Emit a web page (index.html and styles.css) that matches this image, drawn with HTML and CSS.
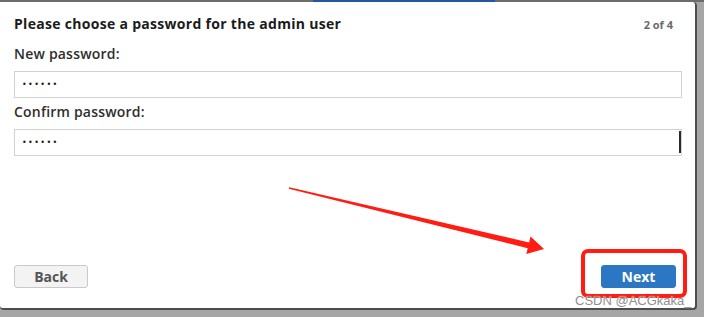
FILE: index.html
```html
<!DOCTYPE html>
<html lang="en">

<head>
    <meta charset="utf-8">
    <meta name="viewport" content="width=device-width, initial-scale=1.0">
    <title>Admin password</title>

    <link rel="stylesheet" href="styles.css">
</head>

<body>
    <div class="topbar"><span class="tab"></span></div>

    <div class="dialog">
        <header class="head">
            <h1>Please choose a password for the admin user</h1>
            <span class="step">2 of 4</span>
        </header>

        <label class="lbl" for="pw1">New password:</label>
        <input class="pw" id="pw1" type="password" value="123456">

        <label class="lbl" for="pw2">Confirm password:</label>
        <div class="field">
            <input class="pw" id="pw2" type="password" value="123456">
        </div>

        <footer class="foot">
            <button class="btn back">Back</button>
            <button class="btn next">Next</button>
        </footer>
    </div>

    <!-- annotation drawn over the screenshot -->
    <svg class="marks" width="704" height="317" viewBox="0 0 704 317">
        <polygon fill="#ff1d13" points="289.2,187.3 529.1,242.4 530.5,236.5 544,249 526.3,254 527.7,248.2 288.8,188.7" />
        <rect x="583" y="251" width="102" height="45" rx="5" fill="none" stroke="#ff1d13" stroke-width="4" />
    </svg>

    <div class="watermark">CSDN @ACGkaka_</div>
</body>

</html>
```

FILE: styles.css
```css
* {
    box-sizing: border-box;
}

body {
    margin: 0;
    width: 704px;
    height: 317px;
    overflow: hidden;
    background: #a6a6a6;
    font-family: "Open Sans", Arial, sans-serif;
    position: relative;
}

.topbar {
    height: 2px;
    background: #6c6c6c;
}

.tab {
    display: block;
    margin-left: 313px;
    width: 182px;
    height: 2px;
    background: #2456a3;
}

.dialog {
    width: 697px;
    height: 308px;
    background: #fff;
    border-right: 2px solid #4d4d4d;
    border-bottom: 2px solid #4d4d4d;
    border-radius: 0 4px 4px 4px;
    display: flex;
    flex-direction: column;
    padding: 13px 13px 0 14px;
}

.head {
    display: flex;
    justify-content: space-between;
    align-items: baseline;
}

h1 {
    margin: 0;
    font-size: 14px;
    line-height: 18px;
    font-weight: 700;
    letter-spacing: 0.3px;
    color: #1b1b1b;
}

.step {
    font-size: 11px;
    font-weight: 700;
    color: #6a6a6a;
    padding-right: 9px;
}

.lbl {
    display: block;
    font-size: 14px;
    line-height: 18px;
    font-weight: 600;
    letter-spacing: 0.2px;
    color: #2e2e2e;
    margin-top: 12px;
    margin-bottom: 8px;
}

label[for="pw2"] {
    margin-top: 5px;
}

.pw {
    display: block;
    width: 100%;
    height: 27px;
    border: 1px solid #d2d2d2;
    border-radius: 0;
    padding: 0 7px;
    font-family: "DejaVu Sans", sans-serif;
    font-size: 8px;
    letter-spacing: 1.4px;
    color: #1e1e1e;
    outline: none;
}

.field {
    position: relative;
}

.field::after {
    content: "";
    position: absolute;
    right: 1px;
    top: 2px;
    width: 2px;
    height: 22px;
    background: #2a2a2a;
}

.foot {
    margin-top: auto;
    display: flex;
    justify-content: space-between;
    padding: 0 6px 20px 0;
}

.btn {
    height: 23px;
    width: 74px;
    border-radius: 3px;
    font-family: "Open Sans", Arial, sans-serif;
    font-size: 14px;
    font-weight: 700;
    padding: 0;
}

.back {
    background: #f3f3f3;
    border: 1px solid #c9c9c9;
    color: #555;
}

.next {
    width: 75px;
    background: #2b77c3;
    border: 1px solid #2b77c3;
    color: #fff;
}

.marks {
    position: absolute;
    left: 0;
    top: 0;
    pointer-events: none;
}

.watermark {
    position: absolute;
    left: 575px;
    top: 293px;
    font-family: "Liberation Sans", Arial, sans-serif;
    font-size: 13px;
    line-height: 15px;
    color: #8f8f8f;
    text-shadow: 0 0 1px #fff;
}
```
